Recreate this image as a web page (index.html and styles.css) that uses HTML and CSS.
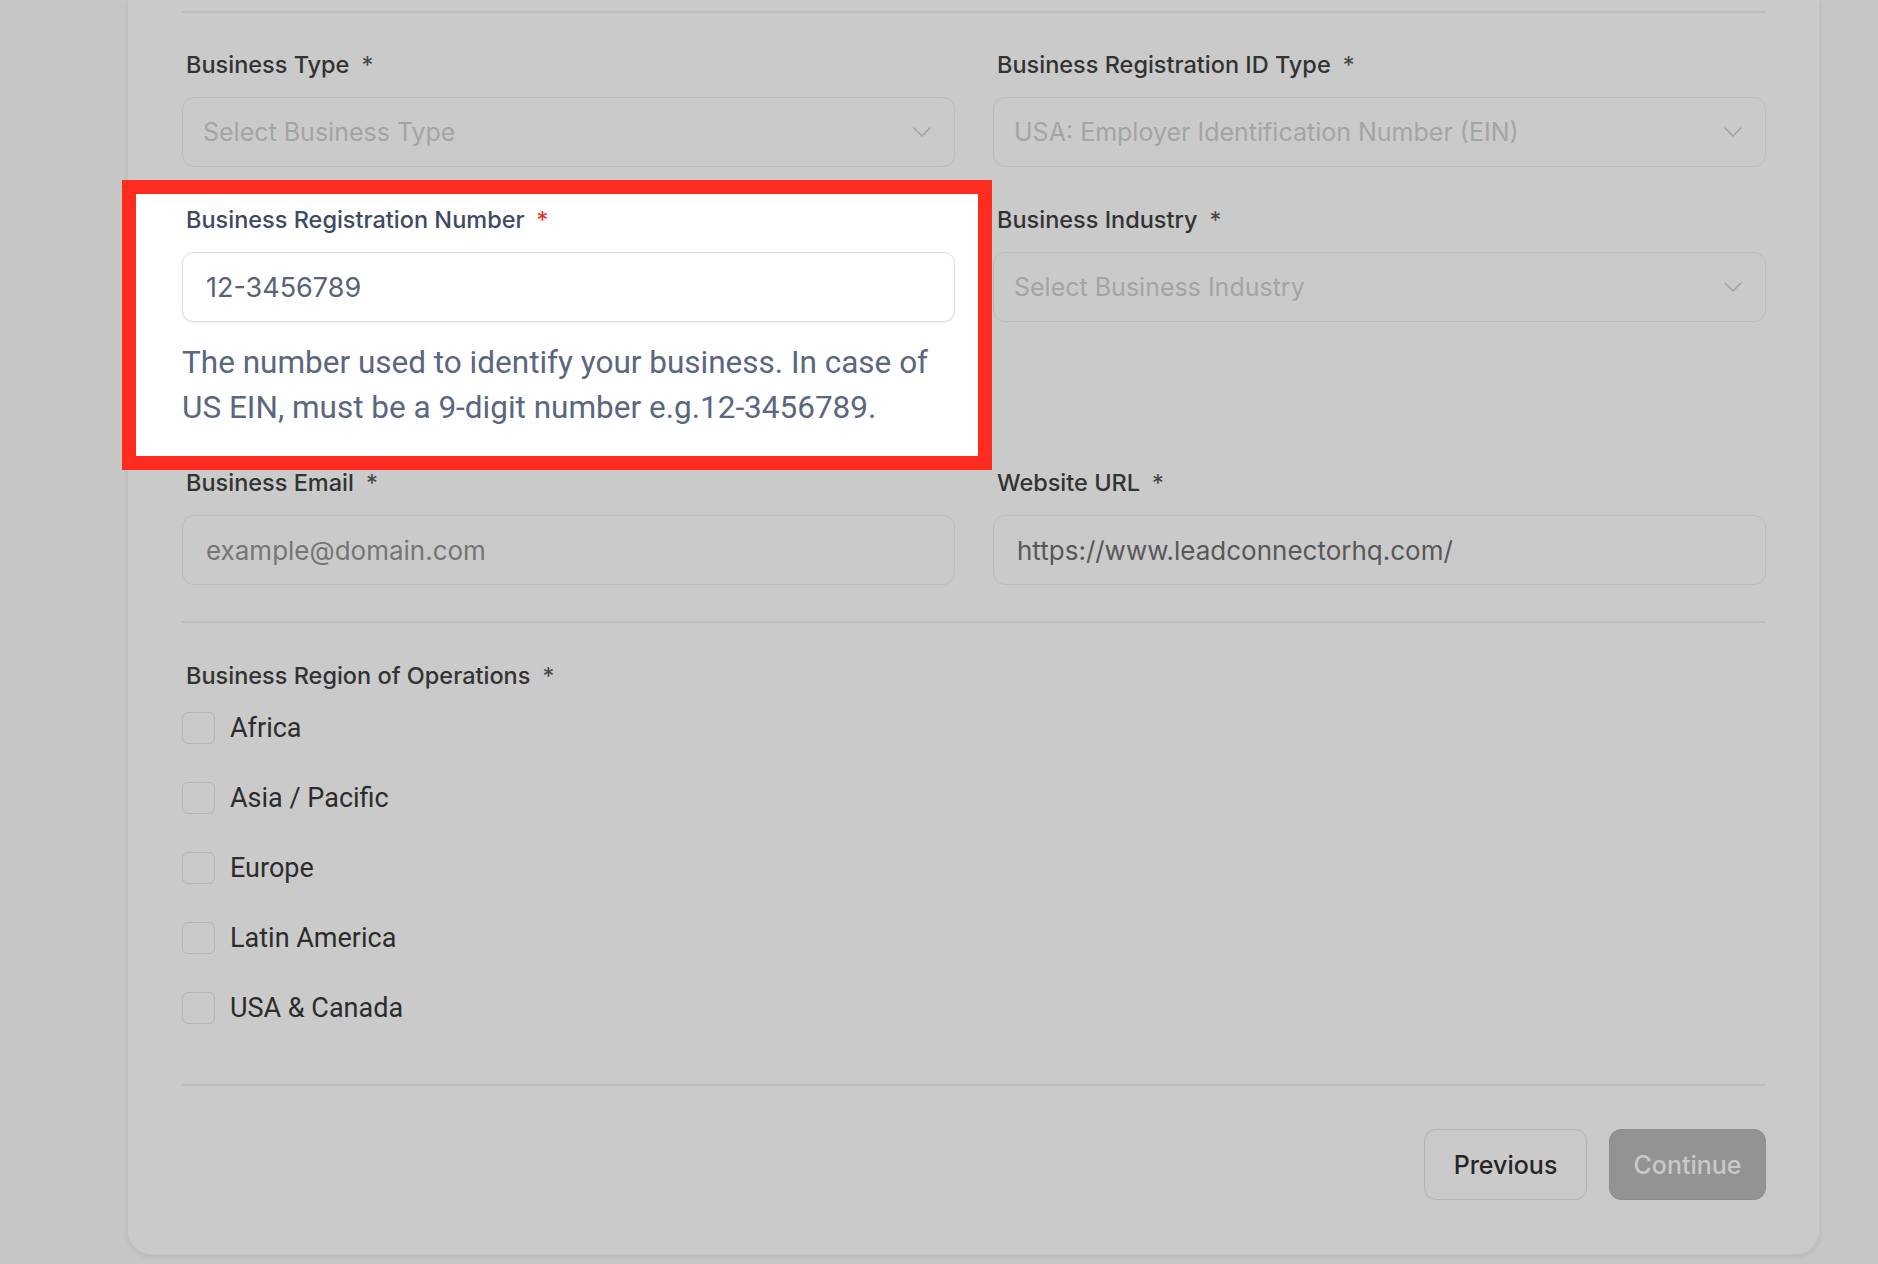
FILE: index.html
```html
<!DOCTYPE html>
<html lang="en">
<head>
<meta charset="utf-8">
<title>Business Information</title>
<link rel="stylesheet" href="styles.css">
</head>
<body>
<div class="card">
  <hr class="divider divider-top">
  <div class="grid">
    <div class="field">
      <label class="label">Business Type<span class="req">*</span></label>
      <div class="control select">
        <span class="placeholder">Select Business Type</span>
        <svg class="chev" width="18" height="10" viewBox="0 0 18 10"><path d="M1 1l8 8 8-8" fill="none" stroke="currentColor" stroke-width="1.5" stroke-linecap="round" stroke-linejoin="round"/></svg>
      </div>
    </div>
    <div class="field">
      <label class="label">Business Registration ID Type<span class="req">*</span></label>
      <div class="control select">
        <span class="placeholder">USA: Employer Identification Number (EIN)</span>
        <svg class="chev" width="18" height="10" viewBox="0 0 18 10"><path d="M1 1l8 8 8-8" fill="none" stroke="currentColor" stroke-width="1.5" stroke-linecap="round" stroke-linejoin="round"/></svg>
      </div>
    </div>
    <div class="field highlight">
      <label class="label hl-label">Business Registration Number<span class="req hl-req">*</span></label>
      <div class="control hl-input"><span class="hl-value">12-3456789</span></div>
      <p class="help">The number used to identify your business. In case of US EIN, must be a 9-digit number e.g.12-3456789.</p>
    </div>
    <div class="field">
      <label class="label">Business Industry<span class="req">*</span></label>
      <div class="control select">
        <span class="placeholder">Select Business Industry</span>
        <svg class="chev" width="18" height="10" viewBox="0 0 18 10"><path d="M1 1l8 8 8-8" fill="none" stroke="currentColor" stroke-width="1.5" stroke-linecap="round" stroke-linejoin="round"/></svg>
      </div>
    </div>
    <div class="field">
      <label class="label">Business Email<span class="req">*</span></label>
      <div class="control"><span class="muted-value">example@domain.com</span></div>
    </div>
    <div class="field">
      <label class="label">Website URL<span class="req">*</span></label>
      <div class="control"><span class="value">https://www.leadconnectorhq.com/</span></div>
    </div>
  </div>
  <hr class="divider divider-mid">
  <div class="regions">
    <label class="label">Business Region of Operations<span class="req">*</span></label>
    <ul class="checks">
      <li class="check"><span class="box"></span><span class="check-label">Africa</span></li>
      <li class="check"><span class="box"></span><span class="check-label">Asia / Pacific</span></li>
      <li class="check"><span class="box"></span><span class="check-label">Europe</span></li>
      <li class="check"><span class="box"></span><span class="check-label">Latin America</span></li>
      <li class="check"><span class="box"></span><span class="check-label">USA &amp; Canada</span></li>
    </ul>
  </div>
  <hr class="divider divider-bottom">
  <div class="actions">
    <button class="btn btn-secondary" type="button">Previous</button>
    <button class="btn btn-primary" type="button" disabled>Continue</button>
  </div>
</div>
</body>
</html>
```

FILE: styles.css
```css
* { box-sizing: border-box; }

html, body {
  margin: 0;
  padding: 0;
}

body {
  background: #c6c6c6;
  font-family: Inter, Roboto, "Liberation Sans", Arial, sans-serif;
  width: 1878px;
  height: 1264px;
  overflow: hidden;
}

.card {
  margin-left: 127px;
  width: 1693px;
  background: #cacaca;
  border: 1px solid #c1c1c1;
  border-top: none;
  border-radius: 0 0 24px 24px;
  box-shadow: 0 2px 4px rgba(0, 0, 0, 0.07);
  padding: 11px 53px 54px 54px;
}

.divider {
  border: none;
  height: 2px;
  background: #bfbfbf;
  margin: 0;
}

.divider-top { margin-bottom: 38px; }
.divider-mid { margin-top: 36px; margin-bottom: 39px; }
.divider-bottom { margin-top: 60px; margin-bottom: 43px; }

.grid {
  display: grid;
  grid-template-columns: 773px 773px;
  column-gap: 38px;
  row-gap: 39px;
  align-items: start;
}

.field {
  display: flex;
  flex-direction: column;
}

.label {
  display: block;
  font-size: 23.5px;
  line-height: 28px;
  font-weight: 500;
  color: #333333;
  padding-left: 4px;
  margin-bottom: 18px;
}

.req {
  margin-left: 12px;
  font-weight: 400;
  color: #444;
}

.control {
  height: 70px;
  border: 1px solid #bcbcbc;
  border-radius: 12px;
  display: flex;
  align-items: center;
  padding: 0 22px 0 23px;
  font-size: 25px;
}

.select {
  justify-content: space-between;
  padding-left: 20px;
}

.placeholder { color: #a4a4a4; }

.chev {
  color: #a0a0a0;
  flex: none;
  margin-right: 1px;
}

.muted-value { color: #757575; font-size: 26px; }
.value { color: #585858; font-size: 26px; }

/* Annotated (highlighted) field */
.highlight {
  position: relative;
  isolation: isolate;
}

.highlight::before {
  content: "";
  position: absolute;
  top: -26px;
  left: -60px;
  right: -37px;
  bottom: -40px;
  background: #ffffff;
  border: 14px solid #fe2b1e;
  z-index: -1;
}

.hl-label { color: #3d4a5f; }
.hl-req { color: #e9271c; }

.hl-input {
  background: #ffffff;
  border-color: #dcdfe4;
  border-radius: 11px;
  box-shadow: 0 1px 2px rgba(16, 24, 40, 0.05);
}

.hl-value { color: #58627a; font-size: 27px; }

.help {
  margin: 18px 0 0 0;
  font-family: Roboto, "Liberation Sans", Arial, sans-serif;
  font-size: 31.5px;
  line-height: 45px;
  color: #5b6680;
}

.regions .label { margin-bottom: 22px; }

.checks {
  list-style: none;
  margin: 0;
  padding: 0;
  display: flex;
  flex-direction: column;
  gap: 38px;
}

.check {
  display: flex;
  align-items: center;
  height: 32px;
}

.box {
  width: 33px;
  height: 32px;
  border: 1px solid #b6b6b6;
  border-radius: 6px;
  flex: none;
}

.check-label {
  margin-left: 15px;
  font-family: Roboto, "Liberation Sans", Arial, sans-serif;
  font-size: 27px;
  color: #2c2c2c;
}

.actions {
  display: flex;
  justify-content: flex-end;
  gap: 22px;
}

.btn {
  height: 71px;
  border-radius: 12px;
  font-family: Inter, Roboto, sans-serif;
  font-size: 25px;
  font-weight: 500;
  padding: 0;
  cursor: pointer;
}

.btn-secondary {
  background: #cacaca;
  border: 1px solid #b4b4b4;
  color: #262626;
  width: 163px;
}

.btn-primary {
  background: #939393;
  border: 1px solid #8e8e8e;
  color: #c9c9c9;
  width: 157px;
}
```
